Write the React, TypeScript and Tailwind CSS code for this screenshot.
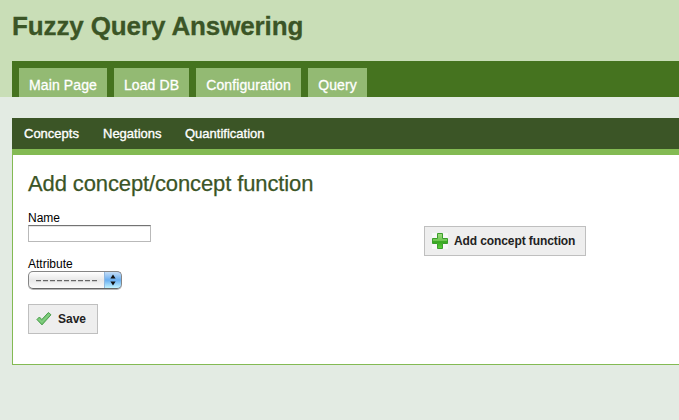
const tabs = [
  { label: "Main Page", width: "w-[88px]" },
  { label: "Load DB", width: "w-[75px]" },
  { label: "Configuration", width: "w-[105px]" },
  { label: "Query", width: "w-[59px]" },
];

function TickIcon() {
  return (
    <svg width="16" height="16" viewBox="0 0 16 16" className="shrink-0">
      <path d="M.9 8.5 3.4 6 5.8 8.5 12.4 1.5 15 3.8 6 13.9Z" fill="#72c472" stroke="#459945" strokeWidth="0.9" strokeLinejoin="round" />
      <path d="M2.6 8 5.9 11.2 13.5 3.1" fill="none" stroke="#85cf82" strokeWidth="1.2" />
    </svg>
  );
}

function PlusIcon() {
  return (
    <svg width="16" height="16" viewBox="0 0 16 16" className="shrink-0">
      <defs>
        <linearGradient id="plus" x1="0" y1="0" x2="0" y2="1">
          <stop offset="0" stopColor="#a0dc80" />
          <stop offset="0.5" stopColor="#6cc550" />
          <stop offset="0.54" stopColor="#35a51f" />
          <stop offset="1" stopColor="#5ed33c" />
        </linearGradient>
      </defs>
      <rect width="16" height="16" fill="#f8f8f8" />
      <path d="M5.5.5h5v5h5v5h-5v5h-5v-5h-5v-5h5Z" fill="url(#plus)" stroke="#3b9e2c" />
    </svg>
  );
}

function SelectBox() {
  return (
    <div className="flex h-[18px] w-[94px] overflow-hidden rounded-[5px] border border-[#858585] border-b-[#666] bg-linear-to-b from-white via-[#e8e8e8] to-[#fafafa] shadow-[0_1px_0_#b5b5b5]">
      <div className="flex flex-1 items-center gap-[2px] pl-[7px]">
        {Array.from({ length: 9 }, (_, i) => (
          <span key={i} className="h-px w-[5px] bg-[#666] shadow-[0_1px_0_#ccc]" />
        ))}
      </div>
      <div className="-my-px -mr-px flex w-[18px] items-center justify-center rounded-r-[5px] border border-[#4278bd] border-t-[#243c9b] border-l-[#91b8de] bg-linear-to-b from-[#c4ddf6] via-[#69aef0] to-[#c2f4ff]">
        <svg width="6" height="12" viewBox="0 0 6 12">
          <path d="M3 .6 5.6 4.5H.4ZM3 11.4.4 7.5h5.2Z" fill="#111" />
        </svg>
      </div>
    </div>
  );
}

export default function App() {
  return (
    <div className="h-[420px] w-full overflow-hidden bg-[#e3ebe3] font-['Liberation_Sans',Arial,sans-serif] text-black">
      <header className="h-[97px] bg-[#c9deb7] pl-3">
        <h1 className="h-[61px] pt-[10px] text-[26px] leading-8 font-bold tracking-[-0.12px] whitespace-nowrap text-[#3b5526] [-webkit-text-stroke:0.3px_#3b5526]">
          Fuzzy Query Answering
        </h1>
        <nav className="flex h-9 gap-[7px] bg-[#45731f] pt-[7px] pl-[7px]">
          {tabs.map((t) => (
            <a key={t.label} className={`${t.width} bg-[#93ba73] pt-[9px] text-center text-[14px] leading-4 tracking-[0.1px] whitespace-nowrap text-white [-webkit-text-stroke:0.3px_white]`}>
              {t.label}
            </a>
          ))}
        </nav>
      </header>
      <main className="mt-[21px] ml-3">
        <nav className="flex h-[37px] border-b-6 border-[#83ba53] bg-[#3b5526] pt-2 pl-3 text-[13px] leading-4 text-white [-webkit-text-stroke:0.35px_white]">
          <a className="w-[79px]">Concepts</a>
          <a className="w-[82px]">Negations</a>
          <a>Quantification</a>
        </nav>
        <section className="flex h-[210px] border-b border-l border-[#83ba53] bg-white pl-[15px]">
          <div className="w-[396px] shrink-0">
            <h2 className="mt-[15px] text-[22px] leading-7 tracking-[-0.12px] whitespace-nowrap text-[#3b5526] [-webkit-text-stroke:0.25px_#3b5526]">Add concept/concept function</h2>
            <label className="mt-[13px] block text-[12px] leading-[14px]">Name</label>
            <div className="h-[17px] w-[123px] border border-[#b9b9b9] border-t-[#737373] bg-white shadow-[inset_0_1px_0_#e5e5e5]" />
            <label className="mt-[15px] block text-[12px] leading-[14px]">Attribute</label>
            <SelectBox />
            <button className="mt-[15px] flex h-[30px] w-[70px] items-center gap-[6px] border border-[#bfbfbf] bg-[#eee] pl-[7px] text-[12px] font-bold text-[#222]">
              <TickIcon />
              Save
            </button>
          </div>
          <button className="mt-[71px] flex h-[30px] w-[162px] items-center gap-[6px] border border-[#bfbfbf] bg-[#eee] pl-[7px] text-[12px] font-bold tracking-[-0.1px] whitespace-nowrap text-[#222]">
            <PlusIcon />
            Add concept function
          </button>
        </section>
      </main>
    </div>
  );
}
